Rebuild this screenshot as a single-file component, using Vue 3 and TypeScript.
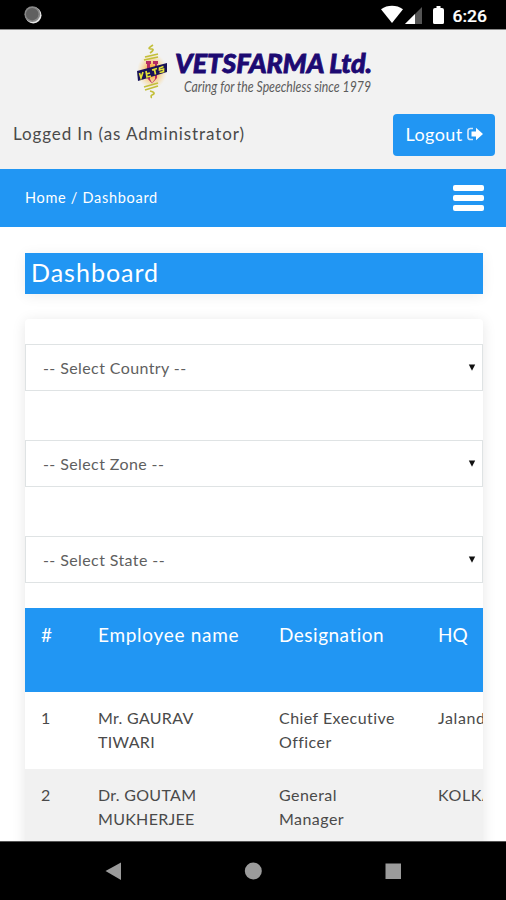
<script setup lang="ts">
interface Employee {
  id: number
  name: string
  designation: string
  hq: string
}

const filters: { key: string; label: string }[] = [
  { key: 'country', label: '-- Select Country --' },
  { key: 'zone', label: '-- Select Zone --' },
  { key: 'state', label: '-- Select State --' },
]

const employees: Employee[] = [
  { id: 1, name: 'Mr. GAURAV TIWARI', designation: 'Chief Executive Officer', hq: 'Jalandhar' },
  { id: 2, name: 'Dr. GOUTAM MUKHERJEE', designation: 'General Manager', hq: 'KOLKATA' },
]
</script>

<template>
  <div class="screen">
    <div class="status-bar">
      <svg class="notice" width="18" height="18" viewBox="0 0 18 18">
        <circle cx="9.3" cy="9.3" r="8.2" fill="#e8e8e8" />
        <circle cx="8.3" cy="8.2" r="7.9" fill="#888" />
        <circle cx="8.2" cy="8.2" r="6.2" fill="#606060" />
      </svg>
      <div class="status-icons">
        <svg width="110" height="22" viewBox="0 0 110 22">
          <path d="M1 5.2C7.500.6 16.500.6 23 5.200L12 19Z" fill="#fff" />
          <path d="M42 3V20H25Z" fill="#555" />
          <path d="M35 10V20H25Z" fill="#fff" />
          <path d="M56.500 2h4v2h1.500q2 0 2 2v12.500q0 1.500-1.500 1.500h-8q-1.500 0-1.500-1.500V6q0-2 2-2h1.500z" fill="#fff" />
          <text class="clock" x="72.500" y="17.600" textLength="34.500" lengthAdjust="spacingAndGlyphs">6:26</text>
        </svg>
      </div>
    </div>

    <header class="header">
      <svg class="logo" width="244" height="62" viewBox="0 0 244 62">
        <defs>
          <radialGradient id="glow">
            <stop offset="0.300" stop-color="#f9b14b" />
            <stop offset="1" stop-color="#f9d98b" stop-opacity="0" />
          </radialGradient>
        </defs>
        <ellipse cx="22" cy="31" rx="15" ry="18" fill="url(#glow)" />
        <path d="M23 5c-5 3-5 4-1 4c2 0 1 2-2 4M15 17l13-3M14 20l14-3M14 47l14-4M15 50l13-4M20 51c5 1 5 3 2 4c-2 1 0 2-1 3" fill="none" stroke="#c3bf3a" stroke-width="1.700" />
        <path d="M16 21h5v3h-1v15l2 4 3-4V24h-2v-3h5v3h-1v14l-5 5.500-5-5.500V24h-1z" fill="#b52b62" />
        <path d="M7 31L37 23V32L8 41Z" fill="#191358" />
        <path d="M9.500 33l1.500 5 2-6M16 31l1 6 4-1M16 34l4-1M22 30l5-1.500M24.500 29.500l1 5M33.500 26.500l-4 1.500v2l4-1v2.500l-4 1" fill="none" stroke="#e5e336" stroke-width="1.700" />
        <text class="brand" x="45" y="33.300" textLength="197" lengthAdjust="spacingAndGlyphs">VETSFARMA Ltd.</text>
        <text class="motto" x="54" y="52" textLength="187" lengthAdjust="spacingAndGlyphs">Caring for the Speechless since 1979</text>
      </svg>
      <div class="session">
        <span class="who">Logged In (as Administrator)</span>
        <button class="logout" type="button">
          <span>Logout</span>
          <svg width="16" height="14" viewBox="0 0 16 14">
            <path d="M6 1.500H3.500Q1 1.500 1 4v6q0 2.500 2.500 2.500H6" fill="none" stroke="#cfe6fc" stroke-width="1.700" />
            <path d="M4.500 4.600H9V.8L16 7 9 13.200V9.400H4.500z" fill="#fff" />
          </svg>
        </button>
      </div>
    </header>

    <nav class="crumbs">
      <span class="path">Home / Dashboard</span>
      <div class="burger"><i></i><i></i><i></i></div>
    </nav>

    <main class="content">
      <h1 class="title"><span>Dashboard</span></h1>
      <section class="card">
        <div class="filters">
          <div v-for="f in filters" :key="f.key" class="select">
            <span>{{ f.label }}</span>
            <svg width="8" height="7" viewBox="0 0 8 7"><path d="M.8.500H7.200L4 6.800Z" fill="#111" /></svg>
          </div>
        </div>
        <div class="table">
          <div class="row head">
            <span>#</span>
            <span class="h-name">Employee name</span>
            <span class="h-desig">Designation</span>
            <span class="h-hq">HQ</span>
          </div>
          <div v-for="e in employees" :key="e.id" class="row">
            <span>{{ e.id }}</span>
            <span class="name">{{ e.name }}</span>
            <span class="desig">{{ e.designation }}</span>
            <span class="hq">{{ e.hq }}</span>
          </div>
        </div>
      </section>
    </main>

    <div class="nav-bar">
      <svg width="506" height="58" viewBox="0 0 506 58">
        <path d="M105.500 29L121 20.500V38Z" fill="#9b9b9b" />
        <circle cx="253.300" cy="29" r="8.500" fill="#9b9b9b" />
        <rect x="385.500" y="21.500" width="15.500" height="15.500" fill="#9b9b9b" />
      </svg>
    </div>
  </div>
</template>

<style>
body {
  margin: 0;
  background: #fff;
}
</style>

<style scoped>
.screen {
  width: 506px;
  height: 900px;
  display: flex;
  flex-direction: column;
  overflow: hidden;
  box-sizing: border-box;
  background: #fff;
  color: #4a4a4a;
  font-family: Lato, 'Open Sans', sans-serif;
}
.status-bar {
  height: 29px;
  flex: none;
  display: flex;
  justify-content: space-between;
  padding: 0 16px 0 24px;
  background: #000;
  border-bottom: 1px solid #8a8a8a;
}
.notice {
  margin-top: 6px;
}
.status-icons {
  margin-top: 4px;
}
.clock {
  font: 500 17px Roboto, sans-serif;
  fill: #fff;
  stroke: #fff;
  stroke-width: 0.2px;
}
.header {
  height: 139px;
  flex: none;
  display: flex;
  flex-direction: column;
  background: #f2f2f2;
}
.logo {
  margin: 10px 0 0 130px;
}
.brand {
  font: italic 900 26px Lato, sans-serif;
  fill: #1d0a72;
  stroke: #1d0a72;
  stroke-width: 0.8px;
}
.motto {
  font: italic 400 14.5px Lato, sans-serif;
  fill: #5c5c5c;
}
.session {
  margin-top: 12px;
  padding: 0 11px 0 13px;
  display: flex;
  justify-content: space-between;
  align-items: center;
}
.who {
  font-size: 17px;
  letter-spacing: 0.9px;
  white-space: nowrap;
  margin-bottom: 3px;
}
.logout {
  width: 102px;
  height: 42px;
  display: flex;
  align-items: center;
  justify-content: center;
  gap: 4px;
  padding: 0 0 2px;
  border: 0;
  border-radius: 4px;
  background: #2196f3;
  color: #fff;
  font: 400 18px Lato, sans-serif;
  letter-spacing: 0.4px;
}
.crumbs {
  height: 58px;
  flex: none;
  display: flex;
  align-items: center;
  justify-content: space-between;
  padding: 0 22px 0 25px;
  box-sizing: border-box;
  background: #2196f3;
  color: #fff;
}
.path {
  margin-bottom: 1px;
  font-size: 14.5px;
  letter-spacing: 0.7px;
}
.burger {
  display: flex;
  flex-direction: column;
  gap: 4px;
}
.burger i {
  width: 31px;
  height: 6px;
  border-radius: 2px;
  background: #fff;
}
.content {
  flex: 1;
  min-height: 0;
  padding: 26px 23px 0 25px;
  overflow: hidden;
}
.title {
  height: 41px;
  margin: 0 0 25px;
  padding: 0 0 4px 6px;
  box-sizing: border-box;
  display: flex;
  align-items: center;
  background: #2196f3;
  box-shadow: 0 2px 14px rgba(0, 0, 0, 0.07);
  color: #fff;
  font-size: 25px;
  font-weight: 400;
  letter-spacing: 1px;
}
.card {
  height: 540px;
  padding-top: 25px;
  box-sizing: border-box;
  border-radius: 4px;
  overflow: hidden;
  background: #fff;
  box-shadow: 0 2px 14px rgba(0, 0, 0, 0.1);
}
.filters {
  display: flex;
  flex-direction: column;
  gap: 49px;
}
.select {
  height: 47px;
  box-sizing: border-box;
  display: flex;
  align-items: center;
  justify-content: space-between;
  padding: 0 6px 1px 17px;
  border: 1px solid #dfe3e4;
  color: #5f5f5f;
  font-size: 16px;
  letter-spacing: 0.4px;
}
.table {
  margin-top: 25px;
}
.row {
  display: grid;
  grid-template-columns: 57px 181px 159px 120px;
  height: 77px;
  box-sizing: border-box;
  padding: 14px 0 0 16px;
  font-size: 16px;
  line-height: 24px;
  letter-spacing: 0.3px;
}
.row:nth-child(odd):not(.head) {
  background: #f1f1f1;
}
.name,
.desig {
  max-width: 125px;
}
.desig {
  letter-spacing: 0.45px;
}
.hq {
  letter-spacing: 0.6px;
}
.head {
  height: 84px;
  padding-top: 15px;
  background: #2196f3;
  color: #fff;
  font-size: 19px;
}
.h-name {
  letter-spacing: 0.7px;
}
.h-desig {
  letter-spacing: 0.5px;
}
.h-hq {
  letter-spacing: 0;
}
.nav-bar {
  height: 58px;
  flex: none;
  background: #000;
  border-top: 1px solid #555;
}
</style>
